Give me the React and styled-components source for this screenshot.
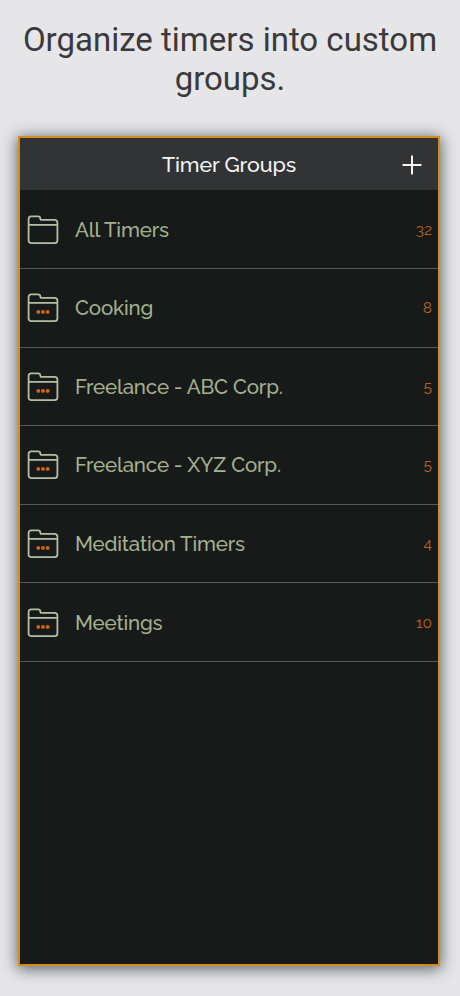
import React from 'react';
import styled, { createGlobalStyle } from 'styled-components';

const GlobalStyle = createGlobalStyle`
  * {
    box-sizing: border-box;
  }

  body {
    margin: 0;
    background: #e6e6e8;
  }
`;

const Page = styled.main`
  display: flex;
  flex-direction: column;
  height: 996px;
  width: 460px;
  padding: 20px 20px 30px 18px;
  background: #e6e6e8;
`;

const Headline = styled.h1`
  height: 116px;
  margin: 0 -20px 0 -18px;
  color: #3a3a3c;
  font: 400 33px/39px Roboto, sans-serif;
  text-align: center;
`;

const Screen = styled.section`
  flex: 1;
  border: 2px solid #d58a1c;
  background: #181a1a;
  box-shadow: 0 2px 14px 1px rgba(45, 55, 60, 0.75);
  font-family: Raleway, Lato, sans-serif;
`;

const TitleBar = styled.header`
  display: grid;
  grid-template-columns: 54px 1fr 54px;
  align-items: center;
  height: 52px;
  padding-top: 2px;
  background: #323335;
`;

const Title = styled.h2`
  grid-column: 2;
  margin: 0;
  color: #f5f5f6;
  font-size: 21.4px;
  font-weight: 500;
  letter-spacing: -0.1px;
  line-height: 26px;
  text-align: center;
`;

const AddButton = styled.button`
  display: flex;
  justify-content: center;
  padding: 0 0 0 2px;
  border: none;
  background: none;
`;

const List = styled.ul`
  margin: 0;
  padding: 0.4px 0 0;
  list-style: none;
`;

const Row = styled.li`
  display: flex;
  align-items: center;
  height: 78.6px;
  padding: 1px 6px 0 7px;
  border-bottom: 1px solid #565858;
`;

const Name = styled.span`
  flex: 1;
  margin-left: 16px;
  color: #a3b18f;
  font-size: 20.5px;
  font-weight: 500;
  letter-spacing: -0.16px;
  line-height: 26px;
`;

const Count = styled.span`
  color: #b5651d;
  font-size: 15.5px;
  line-height: 20px;
`;

const groups = [
  { name: 'All Timers', count: 32, empty: true },
  { name: 'Cooking', count: 8 },
  { name: 'Freelance - ABC Corp.', count: 5 },
  { name: 'Freelance - XYZ Corp.', count: 5 },
  { name: 'Meditation Timers', count: 4 },
  { name: 'Meetings', count: 10 },
];

const FolderIcon = ({ empty }) => (
  <svg width="32" height="30" viewBox="0 0 32 30" fill="none">
    <path
      d="M1.6 9.8V4Q1.6 1.3 4.2 1.3H11Q13.3 1.3 13.3 3.6Q13.3 4.8 14.5 4.8H27.5Q30.4 4.8 30.4 7.5V25.5Q30.4 28.1 27.5 28.1H4.4Q1.6 28.1 1.6 25.5ZM1.6 9.8H30.4"
      stroke="#b5bea2"
      strokeWidth="1.8"
    />
    {!empty && (
      <g fill="#cf6a17">
        <circle cx="11.3" cy="18.9" r="1.9" />
        <circle cx="16" cy="18.9" r="1.9" />
        <circle cx="20.7" cy="18.9" r="1.9" />
      </g>
    )}
  </svg>
);

const App = () => {
  return (
    <>
      <GlobalStyle />
      <Page>
        <Headline>Organize timers into custom groups.</Headline>
        <Screen>
          <TitleBar>
            <Title>Timer Groups</Title>
            <AddButton aria-label="Add group">
              <svg width="20" height="20" viewBox="0 0 20 20">
                <path d="M10 0.5V19.5M0.5 10H19.5" stroke="#f5f5f6" strokeWidth="2" />
              </svg>
            </AddButton>
          </TitleBar>
          <List>
            {groups.map(group => (
              <Row key={group.name}>
                <FolderIcon empty={group.empty} />
                <Name>{group.name}</Name>
                <Count>{group.count}</Count>
              </Row>
            ))}
          </List>
        </Screen>
      </Page>
    </>
  );
};

export default App;
